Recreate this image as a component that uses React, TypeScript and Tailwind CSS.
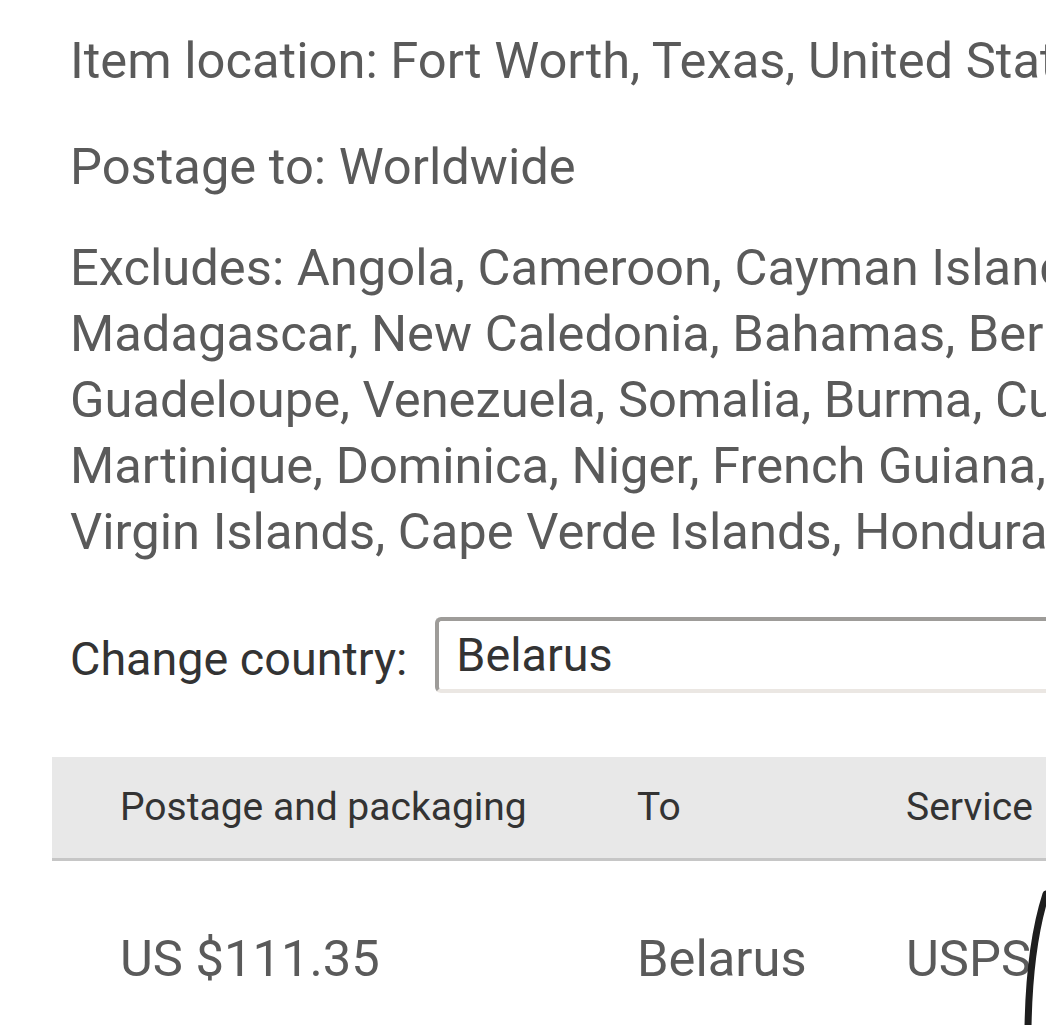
import React from 'react';

const excludeLines = [
  'Excludes: Angola, Cameroon, Cayman Islands, French Polynesia,',
  'Madagascar, New Caledonia, Bahamas, Bermuda, Iran, Libya,',
  'Guadeloupe, Venezuela, Somalia, Burma, Cuba, Haiti, Sudan,',
  'Martinique, Dominica, Niger, French Guiana, Saint Pierre,',
  'Virgin Islands, Cape Verde Islands, Honduras, Nicaragua',
];

export default function App() {
  return (
    <div className="relative w-[1046px] h-[1025px] overflow-hidden bg-white font-['Roboto',sans-serif]">
      <div className="w-[1400px]">
        {/* Item details */}
        <div className="pl-[70px] text-[50.7px] leading-[66px] text-[#5a5a5a] whitespace-nowrap">
          <p className="pt-[28px]">Item location: Fort Worth, Texas, United States</p>
          <p className="mt-[40px]">Postage to: Worldwide</p>
          <p className="mt-[35px]">
            {excludeLines.map((line) => (
              <span key={line} className="block">{line}</span>
            ))}
          </p>
        </div>

        {/* Country picker */}
        <div className="flex items-center pl-[70px] mt-[52px]">
          <span className="text-[46.7px] text-[#333] leading-none mt-[8px] whitespace-nowrap">Change country:</span>
          <div className="ml-[28px] w-[800px] h-[76px] shrink-0 rounded-[6px] border-t-[4px] border-l-[4px] border-b-[4px] border-[#9e9c99] border-b-[#ebe7e3] bg-white flex items-center pl-[17px]">
            <span className="text-[46.7px] text-[#333] leading-none">Belarus</span>
          </div>
        </div>

        {/* Postage table */}
        <div className="ml-[52px] mt-[64px]">
          <div className="flex items-center h-[104px] bg-[#e8e8e8] border-b-[3px] border-[#c6c6c6] text-[39px] text-[#333] whitespace-nowrap">
            <span className="pl-[68px] w-[585px] shrink-0">Postage and packaging</span>
            <span className="w-[269px] shrink-0">To</span>
            <span>Service</span>
          </div>
          <div className="flex items-center h-[196px] text-[50.7px] text-[#5a5a5a] whitespace-nowrap">
            <span className="pl-[68px] w-[585px] shrink-0">US $111.35</span>
            <span className="w-[269px] shrink-0">Belarus</span>
            <span>USPS Priority Mail International</span>
          </div>
        </div>
      </div>

      {/* pen stroke over the screenshot */}
      <svg className="absolute left-[1010px] top-[880px]" width="40" height="150" viewBox="0 0 40 150">
        <path d="M36 14 C27 42 19 85 18 148" fill="none" stroke="#1e1e1e" strokeWidth="7" strokeLinecap="round" />
      </svg>
    </div>
  );
}
